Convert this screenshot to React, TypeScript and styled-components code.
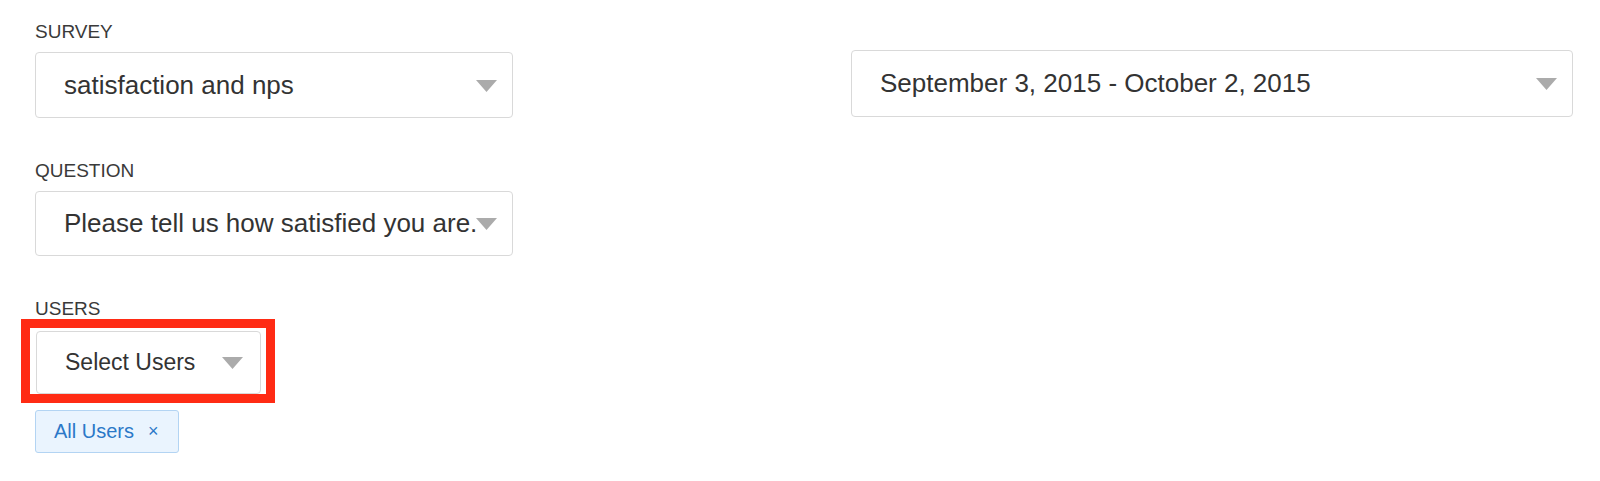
import styled, { createGlobalStyle } from 'styled-components'

const GlobalStyle = createGlobalStyle`
  html, body {
    margin: 0;
    padding: 0;
    background: #ffffff;
  }
  body {
    font-family: "Liberation Sans", Arial, Helvetica, sans-serif;
    color: #333333;
  }
`

const Caret = () => (
  <CaretIcon width="21" height="12" viewBox="0 0 21 12">
    <polygon points="0,0 21,0 10.5,12" fill="#ababab" />
  </CaretIcon>
)

const Dropdown = ({ value, width, height, fontSize, caretGap = 15 }) => (
  <SelectBox $width={width} $height={height} $fontSize={fontSize} $caretGap={caretGap}>
    <SelectValue>{value}</SelectValue>
    <Caret />
  </SelectBox>
)

export default function App() {
  return (
    <>
      <GlobalStyle />
      <Page>
        <LeftColumn>
          <Field>
            <Label>SURVEY</Label>
            <Dropdown value="satisfaction and nps" width={478} height={66} fontSize={26} />
          </Field>

          <Field>
            <Label>QUESTION</Label>
            <Dropdown value="Please tell us how satisfied you are." width={478} height={65} fontSize={26} />
          </Field>

          <Field>
            <Label>USERS</Label>
            <Highlight>
              <Dropdown value="Select Users" width={225} height={63} fontSize={23} caretGap={17} />
            </Highlight>
            <TagList>
              <Tag>
                All Users
                <TagRemove>×</TagRemove>
              </Tag>
            </TagList>
          </Field>
        </LeftColumn>

        <RightColumn>
          <Dropdown value="September 3, 2015 - October 2, 2015" width={722} height={67} fontSize={26} />
        </RightColumn>
      </Page>
    </>
  )
}

const Page = styled.div`
  display: grid;
  grid-template-columns: 478px 722px;
  column-gap: 338px;
  padding: 21px 0 0 35px;
  width: 1600px;
  height: 481px;
  box-sizing: border-box;
`

const LeftColumn = styled.div`
  display: flex;
  flex-direction: column;
  gap: 42px;
`

const RightColumn = styled.div`
  align-self: start;
  margin-top: 29px;
`

const Field = styled.div`
  display: flex;
  flex-direction: column;
  align-items: flex-start;
`

const Label = styled.div`
  font-size: 19px;
  line-height: 22px;
  color: #3a3a3a;
  margin-bottom: 9px;
`

const SelectBox = styled.div`
  display: flex;
  align-items: center;
  justify-content: space-between;
  width: ${({ $width }) => $width}px;
  height: ${({ $height }) => $height}px;
  box-sizing: border-box;
  padding: 0 ${({ $caretGap }) => $caretGap}px 0 28px;
  border: 1px solid #d9d9d9;
  border-radius: 4px;
  background: #ffffff;
  font-size: ${({ $fontSize }) => $fontSize}px;
  color: #333333;
`

const SelectValue = styled.span`
  white-space: nowrap;
  overflow: hidden;
`

const CaretIcon = styled.svg`
  flex: none;
  margin-top: 1px;
`

const Highlight = styled.div`
  border: 9px solid #ff2b14;
  padding: 3px 5px 0 6px;
  margin: -10px 0 0 -14px;
`

const TagList = styled.div`
  display: flex;
  gap: 8px;
  margin-top: 7px;
`

const Tag = styled.div`
  display: flex;
  align-items: center;
  height: 43px;
  box-sizing: border-box;
  padding: 0 19px 0 18px;
  border: 1px solid #b3d4f3;
  border-radius: 3px;
  background: #eaf4fe;
  color: #2b78c8;
  font-size: 20px;
`

const TagRemove = styled.span`
  margin-left: 14px;
  font-size: 18px;
  color: #2b78c8;
`
